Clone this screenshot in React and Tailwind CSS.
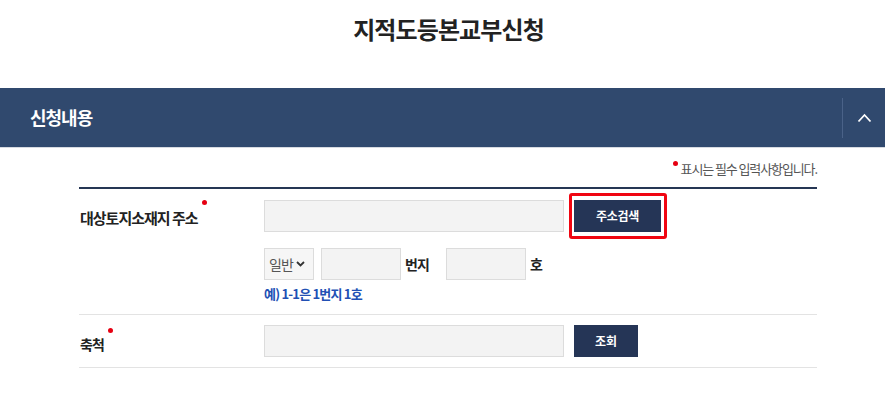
import React from "react";

const font = { fontFamily: '"Noto Sans CJK KR", "Noto Sans", sans-serif' };

function Dot({ className = "" }) {
  return <span className={`inline-block w-[5px] h-[5px] rounded-full bg-[#e60012] ${className}`} />;
}

export default function App() {
  return (
    <div className="w-[885px] h-[402px] bg-white overflow-hidden" style={font}>
      <div className="h-[88px] flex justify-center pt-[10px] pl-[12px]">
        <h1 className="text-[24px] leading-[38px] font-bold text-[#222] tracking-[-0.9px]">지적도등본교부신청</h1>
      </div>

      <div className="h-[59px] bg-[#30496e] flex items-center justify-between pl-[30px]">
        <span className="text-white font-bold text-[18px] tracking-[-1px]">신청내용</span>
        <div className="flex items-center h-full">
          <div className="w-px h-[40px] bg-[#4a6288]" />
          <div className="w-[42px] flex justify-center">
            <svg width="15" height="10" viewBox="0 0 15 10" fill="none">
              <path d="M1.5 8.5 L7.5 2 L13.5 8.5" stroke="white" strokeWidth="1.8" />
            </svg>
          </div>
        </div>
      </div>
      <div className="h-px bg-[#d6dae1]" />

      <div className="ml-[79px] w-[738px]">
        <div className="h-[39px] flex items-center justify-end pt-[2px]">
          <Dot className="mr-[3px] -mt-[10px]" />
          <span className="text-[13px] text-[#555] tracking-[-1.1px]">표시는 필수 입력사항입니다.</span>
        </div>
        <div className="h-[2px] bg-[#253654]" />

        <div className="flex pt-[11px] pb-[11px] border-b border-[#e3e3e3]">
          <div className="w-[185px] pl-[1px] h-[32px] flex items-center">
            <span className="text-[15px] font-bold text-[#222] tracking-[-1px] leading-none mt-[2px]">대상토지소재지 주소</span>
            <Dot className="ml-[4px] -mt-[28px]" />
          </div>
          <div className="flex flex-col">
            <div className="flex items-center">
              <div className="w-[300px] h-[32px] bg-[#f3f3f3] border border-[#dcdcdc]" />
              <div className="relative ml-[10px]">
                <span className="absolute left-[-5px] right-[-6px] top-[-7px] bottom-[-7px] border-[3px] border-[#f00511] rounded-[3px]" />
                <button className="w-[87px] h-[32px] bg-[#253556] text-white text-[12px] font-bold tracking-[-0.3px]">주소검색</button>
              </div>
            </div>
            <div className="flex items-center mt-[16px]">
              <div className="w-[50px] h-[32px] bg-[#f6f6f6] border border-[#dcdcdc] flex items-center pl-[4px] gap-[3px]">
                <span className="text-[14px] text-[#555] tracking-[-1px]">일반</span>
                <svg width="9" height="6" viewBox="0 0 9 6" fill="none">
                  <path d="M1 1 L4.5 4.5 L8 1" stroke="#333" strokeWidth="1.8" />
                </svg>
              </div>
              <div className="ml-[7px] w-[80px] h-[32px] bg-[#f3f3f3] border border-[#dcdcdc]" />
              <span className="w-[45px] pl-[4px] text-[14px] font-bold text-[#222] tracking-[-1px]">번지</span>
              <div className="w-[80px] h-[32px] bg-[#f3f3f3] border border-[#dcdcdc]" />
              <span className="pl-[4px] text-[14px] font-bold text-[#222]">호</span>
            </div>
            <div className="mt-[5px] text-[13px] leading-[18px] font-bold text-[#2150b4] tracking-[-0.8px]">예) 1-1은 1번지 1호</div>
          </div>
        </div>

        <div className="flex pt-[10px] pb-[10px] border-b border-[#e3e3e3]">
          <div className="w-[185px] pl-[1px] h-[32px] flex items-center">
            <span className="text-[14px] font-bold text-[#222] tracking-[-1px] leading-none mt-[6px]">축척</span>
            <Dot className="ml-[4px] -mt-[22px]" />
          </div>
          <div className="flex items-center">
            <div className="w-[300px] h-[32px] bg-[#f3f3f3] border border-[#dcdcdc]" />
            <button className="ml-[10px] w-[64px] h-[32px] bg-[#253556] text-white text-[12px] font-bold">조회</button>
          </div>
        </div>
      </div>
    </div>
  );
}
